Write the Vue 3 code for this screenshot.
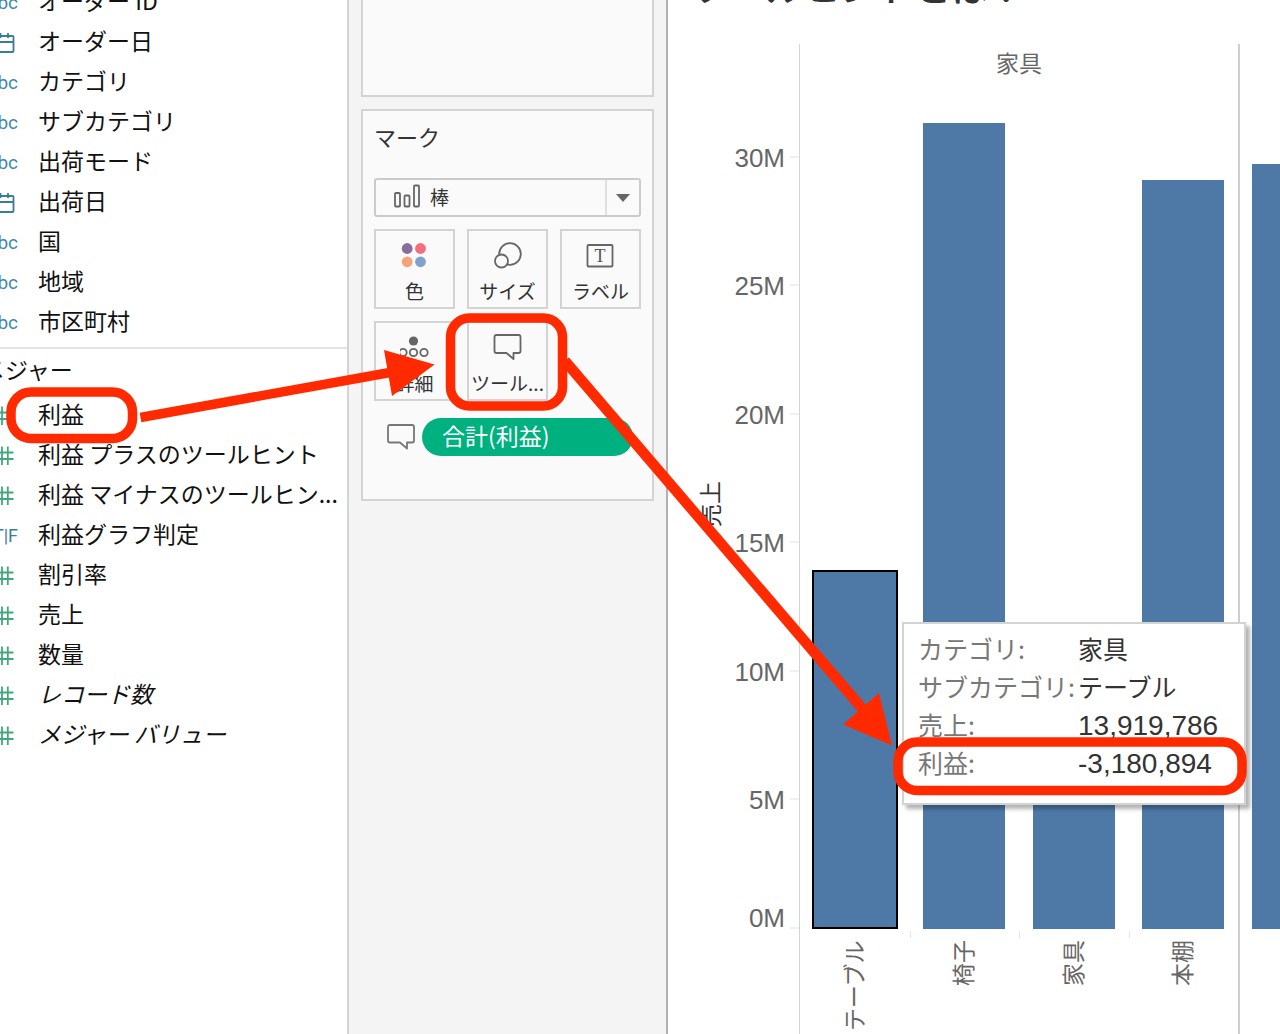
<script setup>
import { ref } from 'vue'

const dimensions = [
  { type: 'abc', name: 'オーダー ID' },
  { type: 'date', name: 'オーダー日' },
  { type: 'abc', name: 'カテゴリ' },
  { type: 'abc', name: 'サブカテゴリ' },
  { type: 'abc', name: '出荷モード' },
  { type: 'date', name: '出荷日' },
  { type: 'abc', name: '国' },
  { type: 'abc', name: '地域' },
  { type: 'abc', name: '市区町村' },
]

const measures = [
  { type: 'num', name: '利益' },
  { type: 'num', name: '利益 プラスのツールヒント' },
  { type: 'num', name: '利益 マイナスのツールヒン...' },
  { type: 'bool', name: '利益グラフ判定' },
  { type: 'num', name: '割引率' },
  { type: 'num', name: '売上' },
  { type: 'num', name: '数量' },
  { type: 'num', name: 'レコード数', generated: true },
  { type: 'num', name: 'メジャー バリュー', generated: true },
]

const markType = ref('bar')

const axisMax = 32.87
const ticks = [30, 25, 20, 15, 10, 5, 0]
const bars = [
  { name: 'テーブル', value: 13.98, selected: true },
  { name: '椅子', value: 31.36 },
  { name: '家具', value: 6.2 },
  { name: '本棚', value: 29.14 },
]
const nextPaneValue = 29.74

const percent = (value) => `${(value / axisMax) * 100}%`

const tooltip = [
  { label: 'カテゴリ:', value: '家具' },
  { label: 'サブカテゴリ:', value: 'テーブル' },
  { label: '売上:', value: '13,919,786', numeric: true },
  { label: '利益:', value: '-3,180,894', numeric: true },
]
</script>

<template>
  <div class="workbook">
    <aside class="data-pane">
      <ul class="fields dimensions">
        <li v-for="f in dimensions" :key="f.name" class="field">
          <span class="type">
            <span v-if="f.type === 'abc'" class="abc">Abc</span>
            <svg v-else width="22" height="22" viewBox="0 0 22 22" fill="none" stroke="#3a7d9b" stroke-width="1.8">
              <rect x="0" y="4" width="17.500" height="16" rx="1" />
              <path d="M0 10H17.500M4.500 1V6M12 1V6" />
            </svg>
          </span>
          {{ f.name }}
        </li>
      </ul>
      <h2 class="section-title">メジャー</h2>
      <ul class="fields">
        <li v-for="f in measures" :key="f.name" class="field" :class="{ generated: f.generated }">
          <span class="type">
            <span v-if="f.type === 'bool'" class="bool">T|F</span>
            <svg v-else width="22" height="22" viewBox="0 0 22 22" fill="none" stroke="#43a77c" stroke-width="1.8">
              <path d="M0 7.500H17.500M0 14H17.500M6 1.500V20M11.800 1.500V20" />
            </svg>
          </span>
          {{ f.name }}
        </li>
      </ul>
    </aside>

    <section class="shelves">
      <div class="card filters"></div>
      <div class="card marks">
        <h2 class="card-title">マーク</h2>
        <div class="mark-type">
          <svg class="mark-icon" width="28" height="26" viewBox="0 0 28 26" fill="none" stroke="#666" stroke-width="1.8">
            <rect x="2" y="9" width="5" height="13.500" rx="1" />
            <rect x="11.500" y="11.500" width="5" height="11" rx="1" />
            <rect x="21" y="1.500" width="5" height="21" rx="1" />
          </svg>
          <select v-model="markType" aria-label="マーク">
            <option value="bar">棒</option>
          </select>
          <span class="drop">
            <svg width="14" height="8" viewBox="0 0 14 8"><path d="M0 0H14L7 8Z" fill="#666" /></svg>
          </span>
        </div>
        <div class="mark-buttons">
          <button type="button">
            <svg width="30" height="30" viewBox="0 0 30 30">
              <circle cx="7.200" cy="7.500" r="5.400" fill="#876f9b" />
              <circle cx="20.500" cy="7.500" r="5.400" fill="#f76d80" />
              <circle cx="7.200" cy="20.800" r="5.400" fill="#f3a577" />
              <circle cx="20.500" cy="20.800" r="5.400" fill="#7fa3cd" />
            </svg>
            色
          </button>
          <button type="button">
            <svg width="30" height="30" viewBox="0 0 30 30" fill="none" stroke="#666" stroke-width="1.8">
              <circle cx="17" cy="13" r="10.800" />
              <circle cx="8.500" cy="20" r="6.500" fill="#fafafa" />
            </svg>
            サイズ
          </button>
          <button type="button">
            <svg width="30" height="30" viewBox="0 0 30 30">
              <rect x="1.500" y="4" width="25" height="21.500" rx="1" fill="none" stroke="#666" stroke-width="1.8" />
              <text x="14" y="20.500" text-anchor="middle" class="glyph-t">T</text>
            </svg>
            ラベル
          </button>
          <button type="button">
            <svg width="30" height="30" viewBox="0 0 30 30" fill="none" stroke="#666" stroke-width="1.8">
              <circle cx="13.500" cy="8" r="4.600" fill="#666" stroke="none" />
              <circle cx="3" cy="19.500" r="3.700" />
              <circle cx="13.500" cy="19.500" r="3.700" />
              <circle cx="24" cy="19.500" r="3.700" />
            </svg>
            詳細
          </button>
          <button type="button">
            <svg width="30" height="30" viewBox="0 0 30 30" fill="none" stroke="#666" stroke-width="1.8" stroke-linejoin="round">
              <path d="M3.500 2H25.500Q27.500 2 27.500 4V18Q27.500 20 25.500 20H20.500V26L13.500 20H3.500Q1.500 20 1.500 18V4Q1.500 2 3.500 2Z" />
            </svg>
            ツール...
          </button>
        </div>
        <div class="encoding">
          <svg width="30" height="30" viewBox="0 0 30 30" fill="none" stroke="#777" stroke-width="1.8" stroke-linejoin="round">
            <path d="M4 3H26Q28 3 28 5V18.500Q28 20.500 26 20.500H21V26.500L14 20.500H4Q2 20.500 2 18.500V5Q2 3 4 3Z" />
          </svg>
          <button type="button" class="pill">合計(利益)</button>
        </div>
      </div>
    </section>

    <main class="sheet">
      <h1 class="sheet-title">ツールヒントとは？</h1>
      <div class="chart">
        <div class="axis-title"><span>売上</span></div>
        <div class="axis">
          <div v-for="t in ticks" :key="t" class="tick" :class="{ zero: t === 0 }" :style="{ bottom: percent(t) }">
            <span>{{ t }}M</span>
          </div>
        </div>
        <div class="pane">
          <h3 class="pane-title">家具</h3>
          <div class="plot">
            <div v-for="b in bars" :key="b.name" class="slot">
              <div class="bar" :class="{ selected: b.selected }" :style="{ height: percent(b.value) }"></div>
            </div>
          </div>
          <div class="names">
            <div v-for="b in bars" :key="b.name" class="name"><span>{{ b.name }}</span></div>
          </div>
        </div>
        <div class="pane next">
          <h3 class="pane-title"></h3>
          <div class="plot">
            <div class="slot">
              <div class="bar" :style="{ height: percent(nextPaneValue) }"></div>
            </div>
          </div>
          <div class="names"></div>
        </div>
      </div>
    </main>

    <div class="tooltip" role="tooltip">
      <table>
        <tbody>
          <tr v-for="row in tooltip" :key="row.label">
            <th scope="row">{{ row.label }}</th>
            <td :class="{ numeric: row.numeric }">{{ row.value }}</td>
          </tr>
        </tbody>
      </table>
    </div>

    <svg class="annotations" width="1280" height="1034" viewBox="0 0 1280 1034" aria-hidden="true">
      <g fill="none" stroke="#ff2a00" stroke-width="9.500">
        <rect x="11" y="392" width="121.500" height="46.500" rx="20" />
        <rect x="450.500" y="318" width="112" height="88" rx="19" />
        <rect x="898" y="742" width="344" height="48.500" rx="19" />
        <path d="M140.500 417.500L390 372.500" />
        <path d="M565 361L866 713" stroke-width="10.500" />
      </g>
      <g fill="#ff2a00">
        <path d="M384 350L434.500 364.500L392 396Z" />
        <path d="M879 693L892 745.500L843 724.500Z" />
      </g>
    </svg>
  </div>
</template>

<style>
body {
  margin: 0;
}
</style>

<style scoped>
.workbook {
  position: relative;
  display: grid;
  grid-template-columns: 349px 319px minmax(0, 1fr);
  min-height: 100vh;
  overflow: hidden;
  background: #fff;
  font-family: "Noto Sans CJK JP", sans-serif;
  color: #111;
}

h1,
h2,
h3,
ul {
  margin: 0;
  padding: 0;
  font-weight: 400;
}

.data-pane {
  border-right: 2px solid #d4d4d4;
  font-size: 23px;
  overflow: hidden;
}

.fields {
  list-style: none;
}

.dimensions {
  margin-top: -20px;
  padding-bottom: 7px;
  border-bottom: 2px solid #e4e4e4;
}

.field {
  display: flex;
  align-items: center;
  gap: 20px;
  height: 40px;
  line-height: 40px;
  white-space: nowrap;
}

.generated {
  font-style: italic;
}

.type {
  display: flex;
  justify-content: flex-end;
  flex: none;
  width: 18px;
  padding-top: 6px;
  font-style: normal;
}

.abc,
.bool {
  font-family: Roboto, sans-serif;
  font-size: 19px;
  line-height: 24px;
  color: #4489a8;
}

.bool {
  font-size: 18px;
  color: #3a7d9b;
}

.type svg {
  flex: none;
}

.section-title {
  margin: 0 0 4px -18px;
  font-size: 23px;
  line-height: 40px;
}

.shelves {
  display: flex;
  flex-direction: column;
  gap: 12px;
  padding: 0 12px;
  border-right: 2px solid #b0b0b0;
  background: #f4f4f4;
}

.card {
  border: 2px solid #d3d3d3;
  background: #fafafa;
}

.filters {
  height: 95px;
  border-top: 0;
}

.marks {
  padding: 9px 11px 43px;
}

.card-title {
  padding-bottom: 26px;
  font-size: 22px;
  line-height: 32px;
  color: #333;
}

.mark-type {
  position: relative;
  display: flex;
  margin-bottom: 12px;
}

.mark-type select {
  width: 100%;
  height: 39px;
  padding: 0 44px 2px 54px;
  border: 2px solid #cbcbcb;
  border-radius: 3px;
  appearance: none;
  background: #fafafa;
  font-family: inherit;
  font-size: 19px;
  color: #333;
}

.mark-icon {
  position: absolute;
  left: 19px;
  top: 6px;
}

.drop {
  position: absolute;
  top: 2px;
  right: 2px;
  bottom: 2px;
  display: flex;
  align-items: center;
  justify-content: center;
  width: 32px;
  border-left: 2px solid #e0e0e0;
  pointer-events: none;
}

.mark-buttons {
  display: grid;
  grid-template-columns: repeat(3, minmax(0, 1fr));
  gap: 12px;
}

.mark-buttons button {
  display: flex;
  flex-direction: column;
  align-items: center;
  gap: 8px;
  height: 80px;
  padding: 10px 0 0;
  border: 2px solid #d3d3d3;
  background: #fafafa;
  font-family: inherit;
  font-size: 19px;
  line-height: 24px;
  color: #333;
  white-space: nowrap;
}

.glyph-t {
  font-family: "Liberation Serif", serif;
  font-size: 18px;
  fill: #555;
}

.encoding {
  display: flex;
  align-items: center;
  gap: 6px;
  padding: 17px 8px 0 12px;
}

.pill {
  flex: 1;
  height: 38px;
  padding: 0 20px 4px;
  border: 0;
  border-radius: 19px;
  background: #00b180;
  font-family: inherit;
  font-size: 23px;
  line-height: 34px;
  text-align: left;
  color: #fff;
}

.sheet {
  min-width: 0;
  overflow: hidden;
}

.sheet-title {
  height: 36px;
  margin: -32px 0 40px 24px;
  font-size: 37px;
  font-weight: 500;
  line-height: 36px;
  color: #333;
  white-space: nowrap;
}

.chart {
  display: flex;
  color: #666;
}

.axis-title {
  display: flex;
  align-items: center;
  justify-content: center;
  flex: none;
  width: 30px;
  height: 920px;
  margin-left: 26px;
}

.axis-title span,
.name span {
  writing-mode: vertical-rl;
  text-orientation: sideways;
  transform: rotate(180deg);
  font-size: 23px;
  line-height: 30px;
}

.axis-title span {
  color: #333;
}

.axis {
  position: relative;
  flex: none;
  width: 75px;
  height: 845px;
  margin-top: 40px;
}

.tick {
  position: absolute;
  right: 0;
  display: flex;
  align-items: flex-end;
  gap: 5px;
  font-family: "Liberation Sans", sans-serif;
  font-size: 26px;
  line-height: 28px;
}

.tick span {
  margin-bottom: -14px;
}

.tick.zero span {
  margin-bottom: -3px;
}

.tick::after {
  content: "";
  width: 9px;
  height: 2px;
  background: #f0f0f0;
}

.pane {
  display: flex;
  flex-direction: column;
  flex: 0 0 438px;
  border-left: 1px solid #d4d4d4;
}

.pane.next {
  flex: 1 0 0;
  border-left: 2px solid #cecece;
  overflow: hidden;
}

.pane-title {
  height: 40px;
  font-size: 23px;
  line-height: 36px;
  text-align: center;
}

.plot {
  display: flex;
  height: 845px;
}

.slot {
  display: flex;
  align-items: flex-end;
  justify-content: center;
  flex: 1;
}

.next .slot {
  flex: 0 0 106px;
}

.bar {
  width: 82px;
  background: #4e79a7;
}

.bar.selected {
  width: 86px;
  box-sizing: border-box;
  border: 2px solid #000;
}

.names {
  display: flex;
  flex: 1;
  height: 105px;
}

.name {
  position: relative;
  display: flex;
  justify-content: center;
  flex: 1;
  padding: 11px 4px 0 0;
}

.name + .name::before {
  content: "";
  position: absolute;
  left: 0;
  top: 2px;
  width: 1px;
  height: 7px;
  background: #e4e4e4;
}

.name span {
  height: 94px;
  text-align: right;
}

.tooltip {
  position: absolute;
  left: 902px;
  top: 622px;
  box-sizing: border-box;
  width: 344px;
  padding: 7px 0 20px 14px;
  border: 2px solid #d3d3d3;
  background: #fff;
  box-shadow: 4px 4px 4px rgba(0, 0, 0, 0.3);
}

.tooltip table {
  border-spacing: 0;
  table-layout: fixed;
  width: 100%;
}

.tooltip th,
.tooltip td {
  height: 38px;
  padding: 0;
  font-size: 25px;
  font-weight: 400;
  line-height: 34px;
  text-align: left;
  vertical-align: top;
  white-space: nowrap;
}

.tooltip th {
  width: 160px;
  color: #787878;
}

.tooltip td {
  color: #333;
}

.tooltip .numeric {
  font-family: "Liberation Sans", sans-serif;
  font-size: 28px;
  line-height: 38px;
}

.annotations {
  position: absolute;
  left: 0;
  top: 0;
  pointer-events: none;
}
</style>
